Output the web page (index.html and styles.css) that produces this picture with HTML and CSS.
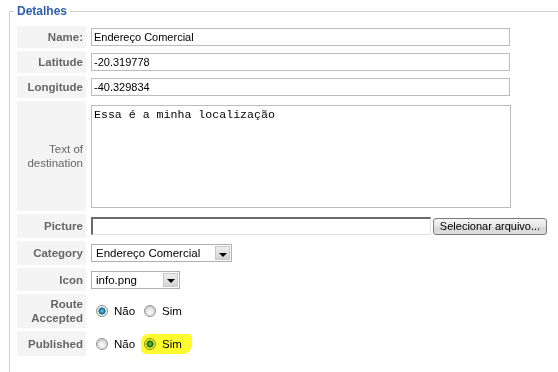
FILE: index.html
```html
<!DOCTYPE html>
<html lang="pt">
  <head>
    <meta charset="UTF-8" />
    <title>Detalhes</title>
    <link rel="stylesheet" href="styles.css">
  </head>
  <body>
    <fieldset class="details">
      <legend>Detalhes</legend>

      <div class="field">
        <label class="key" for="name">Name:</label>
        <div class="control">
          <input id="name" class="text" type="text" value="Endereço Comercial" />
        </div>
      </div>

      <div class="field">
        <label class="key" for="latitude">Latitude</label>
        <div class="control">
          <input id="latitude" class="text" type="text" value="-20.319778" />
        </div>
      </div>

      <div class="field">
        <label class="key" for="longitude">Longitude</label>
        <div class="control">
          <input id="longitude" class="text" type="text" value="-40.329834" />
        </div>
      </div>

      <div class="field field-tall">
        <label class="key plain" for="destination">Text of destination</label>
        <div class="control">
          <textarea id="destination">Essa é a minha localização</textarea>
        </div>
      </div>

      <div class="field field-picture">
        <label class="key" for="picture">Picture</label>
        <div class="control">
          <input id="picture" class="file-path" type="text" readonly />
          <button class="browse" type="button">Selecionar arquivo...</button>
        </div>
      </div>

      <div class="field field-select">
        <span class="key">Category</span>
        <div class="control">
          <div class="select select-category">
            <span class="select-value">Endereço Comercial</span>
            <span class="select-arrow"></span>
          </div>
        </div>
      </div>

      <div class="field field-icon">
        <span class="key">Icon</span>
        <div class="control">
          <div class="select select-icon">
            <span class="select-value">info.png</span>
            <span class="select-arrow"></span>
          </div>
        </div>
      </div>

      <div class="field field-route">
        <span class="key">Route Accepted</span>
        <div class="control choices">
          <label class="choice"><input type="radio" name="route" checked /> Não</label>
          <label class="choice"><input type="radio" name="route" /> Sim</label>
        </div>
      </div>

      <div class="field field-published">
        <span class="key">Published</span>
        <div class="control choices">
          <label class="choice"><input type="radio" name="published" /> Não</label>
          <label class="choice highlight"><input type="radio" name="published" checked /> Sim</label>
        </div>
      </div>
    </fieldset>
  </body>
</html>
```

FILE: styles.css
```css
html {
  overflow: hidden;
}
body {
  margin: 4px 0 0 9px;
  font-family: "Liberation Sans", Arial, sans-serif;
  font-size: 11px;
  color: #000;
  background-color: #fff;
}
.details {
  margin: 0;
  padding: 8px 0 30px 7px;
  border: 1px solid #cfcfcf;
  border-right: none;
}
.details legend {
  margin-left: -3px;
  padding: 0 3px;
  font-size: 12px;
  line-height: 14px;
  font-weight: bold;
  color: #2d5fae;
}
.field {
  display: flex;
  gap: 5px;
  height: 22px;
  margin-bottom: 3px;
}
.field-tall {
  height: 110px;
}
.field-picture,
.field-select {
  height: 24px;
}
.field-icon {
  height: 23px;
}
.field-route {
  height: 34px;
}
.field-published {
  height: 25px;
}
.key {
  box-sizing: border-box;
  width: 69px;
  flex-shrink: 0;
  display: flex;
  align-items: center;
  justify-content: flex-end;
  padding-right: 3px;
  background-color: #f4f4f4;
  text-align: right;
  font-size: 11.5px;
  line-height: 14px;
  font-weight: bold;
  color: #666;
}
.key.plain {
  font-weight: normal;
}
.control {
  display: flex;
  align-items: center;
}
.text,
.file-path {
  box-sizing: border-box;
  height: 18px;
  margin: 0;
  padding: 0 2px;
  border: 1px solid #bcbcbc;
  font-family: "Liberation Sans", Arial, sans-serif;
  font-size: 11px;
  color: #000;
}
.text {
  width: 419px;
}
textarea {
  box-sizing: border-box;
  width: 420px;
  height: 103px;
  margin: 0;
  padding: 2px;
  border: 1px solid #bcbcbc;
  font-family: "Liberation Mono", "Courier New", monospace;
  font-size: 11.6px;
  resize: none;
}
.file-path {
  width: 340px;
  border-width: 2px 1px 1px 2px;
  border-color: #6b6b6b #e2e2e2 #e2e2e2 #6b6b6b;
}
.browse {
  box-sizing: border-box;
  width: 114px;
  height: 17px;
  margin-left: 2px;
  padding: 0;
  border: 1px solid #7a7a7a;
  border-radius: 3px;
  background: linear-gradient(#f6f6f6, #e6e6e6 50%, #d6d6d6 51%, #dedede);
  font-family: "Liberation Sans", Arial, sans-serif;
  font-size: 11px;
  color: #000;
}
.select {
  box-sizing: border-box;
  display: flex;
  align-items: center;
  height: 18px;
  border: 1px solid #b0b0b0;
  background-color: #fff;
}
.select-category {
  width: 141px;
}
.select-icon {
  width: 89px;
}
.select-value {
  flex: 1;
  padding-left: 4px;
  font-size: 11.5px;
}
.select-arrow {
  box-sizing: border-box;
  width: 15px;
  height: 14px;
  margin-right: 1px;
  display: flex;
  align-items: center;
  justify-content: center;
  border: 1px solid #c8c8c8;
  background: linear-gradient(#efefef, #d4d4d4);
}
.select-arrow::after {
  content: "";
  margin-top: 3px;
  border-left: 4px solid transparent;
  border-right: 4px solid transparent;
  border-top: 4px solid #000;
}
.choices {
  padding-left: 5px;
  gap: 9px;
}
.choice {
  display: flex;
  align-items: center;
  gap: 6px;
  font-size: 11.5px;
}
.choice input {
  appearance: none;
  -webkit-appearance: none;
  box-sizing: border-box;
  width: 12px;
  height: 12px;
  margin: 0;
  border: 1px solid #939393;
  border-radius: 50%;
  background: radial-gradient(circle at 50% 60%, #fdfdfd 0, #e8e8e8 3px, #c9c9c9 6px);
}
.choice input:checked {
  background: radial-gradient(circle at 50% 50%, #6fd0ef 0, #2a8bb4 2px, #145574 3.3px, #f2f2f2 3.8px, #dcdcdc 6px);
}
.highlight {
  margin-left: -3px;
  padding: 4px 10px 4px 3px;
  border-radius: 7px 4px 9px 5px;
  background-color: #fdfd2e;
}
.highlight input {
  mix-blend-mode: multiply;
}
```
